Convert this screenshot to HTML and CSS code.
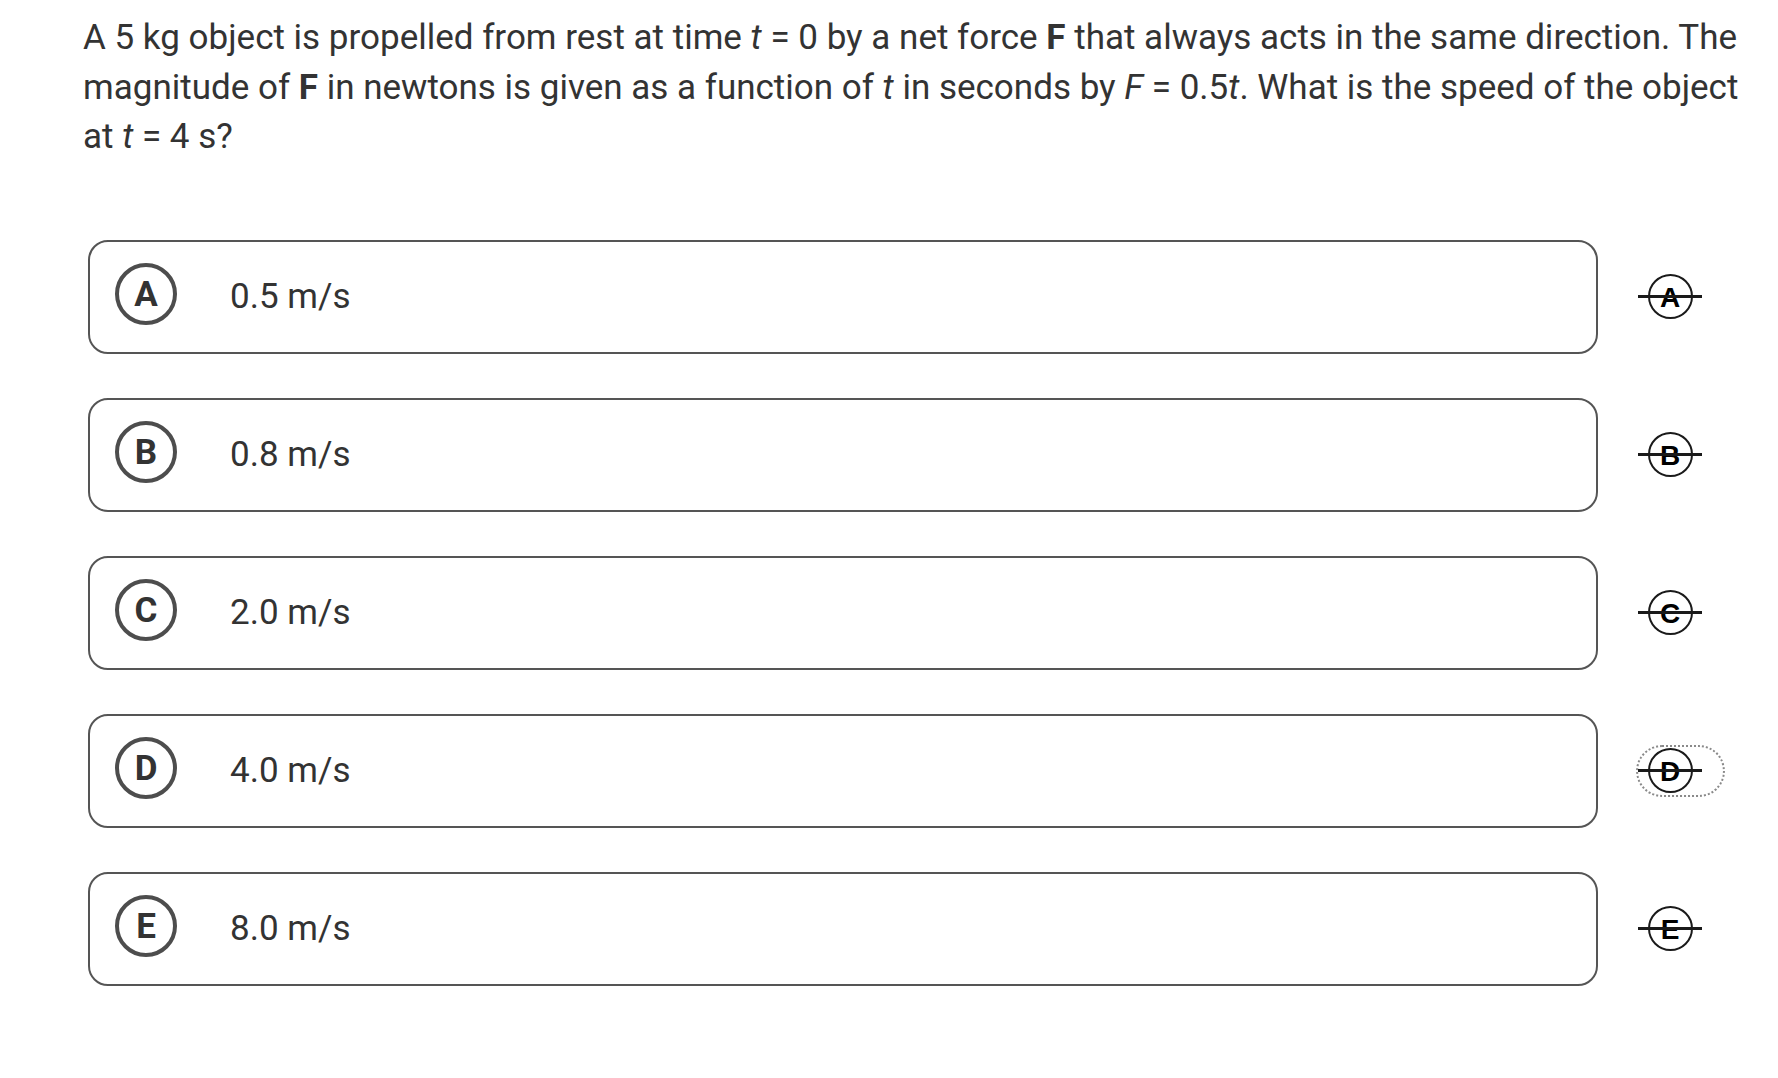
FILE: index.html
```html
<!DOCTYPE html>
<html lang="en">
<head>
<meta charset="utf-8">
<title>Question</title>
<link rel="stylesheet" href="styles.css">
</head>
<body>
<main class="page">
  <p class="question">A 5 kg object is propelled from rest at time <i>t</i> = 0 by a net force <b>F</b> that always acts in the same direction. The magnitude of <b>F</b> in newtons is given as a function of <i>t</i> in seconds by <i>F</i> = 0.5<i>t</i>. What is the speed of the object at <i>t</i> = 4 s?</p>
  <ul class="options">
    <li class="option-row">
      <div class="option-box"><span class="letter">A</span><span class="answer">0.5 m/s</span></div>
      <button class="strike" type="button"><span class="strike-icon"><span class="strike-letter">A</span></span></button>
    </li>
    <li class="option-row">
      <div class="option-box"><span class="letter">B</span><span class="answer">0.8 m/s</span></div>
      <button class="strike" type="button"><span class="strike-icon"><span class="strike-letter">B</span></span></button>
    </li>
    <li class="option-row">
      <div class="option-box"><span class="letter">C</span><span class="answer">2.0 m/s</span></div>
      <button class="strike" type="button"><span class="strike-icon"><span class="strike-letter">C</span></span></button>
    </li>
    <li class="option-row">
      <div class="option-box"><span class="letter">D</span><span class="answer">4.0 m/s</span></div>
      <button class="strike is-focused" type="button"><span class="strike-icon"><span class="strike-letter">D</span></span></button>
    </li>
    <li class="option-row">
      <div class="option-box"><span class="letter">E</span><span class="answer">8.0 m/s</span></div>
      <button class="strike" type="button"><span class="strike-icon"><span class="strike-letter">E</span></span></button>
    </li>
  </ul>
</main>
</body>
</html>
```
FILE: styles.css
```css
html, body {
  margin: 0;
  padding: 0;
  background: #ffffff;
}

.page {
  padding: 13px 53px 0 83px;
  font-family: Roboto, "Liberation Sans", sans-serif;
  color: #333333;
}

.question {
  margin: 0 -20px 0 0;
  font-size: 35px;
  line-height: 49.5px;
}

.question b {
  font-weight: 700;
}

.options {
  list-style: none;
  margin: 78px 0 0 0;
  padding: 0 0 0 5px;
  display: flex;
  flex-direction: column;
  gap: 44px;
}

.option-row {
  display: flex;
  align-items: center;
  gap: 38px;
}

.option-box {
  flex: 1;
  height: 114px;
  box-sizing: border-box;
  border: 2px solid #555555;
  border-radius: 20px;
  display: flex;
  align-items: center;
  padding-left: 25px;
}

.letter {
  width: 62px;
  height: 62px;
  box-sizing: border-box;
  border: 4px solid #4d4d4d;
  border-radius: 50%;
  display: flex;
  align-items: center;
  justify-content: center;
  font-size: 35px;
  font-weight: 700;
  color: #333333;
  margin-top: -5px;
}

.answer {
  margin-left: 53px;
  font-size: 35px;
  color: #333333;
}

.strike {
  width: 89px;
  height: 52px;
  box-sizing: border-box;
  border: 2px dotted transparent;
  border-radius: 26px;
  background: none;
  padding: 0;
  display: flex;
  align-items: center;
  justify-content: flex-start;
  cursor: pointer;
}

.strike.is-focused {
  border-color: #8a8a8a;
}

.strike-icon {
  position: relative;
  width: 64px;
  height: 45px;
  display: flex;
  align-items: center;
  justify-content: center;
}

.strike-icon::before {
  content: "";
  position: absolute;
  left: 9.5px;
  top: 0;
  width: 45px;
  height: 45px;
  box-sizing: border-box;
  border: 2.5px solid #1a1a1a;
  border-radius: 50%;
}

.strike-icon::after {
  content: "";
  position: absolute;
  left: 0;
  right: 0;
  top: 21px;
  height: 2.5px;
  background: #1a1a1a;
}

.strike-letter {
  position: relative;
  font-family: "Liberation Sans", Arial, sans-serif;
  font-weight: 700;
  font-size: 28px;
  line-height: 1;
  color: #000000;
  margin-top: 3px;
}
```
